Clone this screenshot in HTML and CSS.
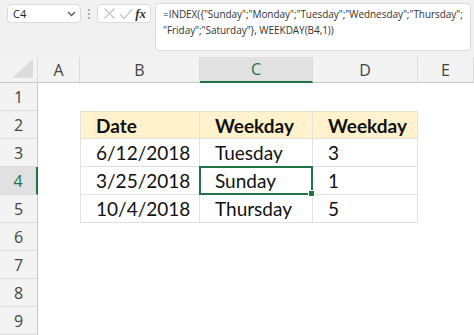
FILE: index.html
```html
<!DOCTYPE html>
<html>
<head>
<meta charset="utf-8">
<link rel="stylesheet" href="styles.css">
</head>
<body>
<div class="app">
  <div class="fbar">
    <div class="namebox">
      <span class="ref">C4</span>
      <svg class="chev" width="9" height="6" viewBox="0 0 9 6"><polyline points="1,1 4.5,4.5 8,1" fill="none" stroke="#555" stroke-width="1.3"/></svg>
    </div>
    <div class="dots"><i></i><i></i><i></i></div>
    <div class="fxbox">
      <svg width="13" height="13" viewBox="0 0 13 13"><path d="M1.5 1.5 L11.5 11.5 M11.5 1.5 L1.5 11.5" stroke="#c2c2c2" stroke-width="1.2" fill="none"/></svg>
      <svg width="14" height="12" viewBox="0 0 14 12"><path d="M1 6.5 L5 10.5 L13 1.5" stroke="#c2c2c2" stroke-width="1.2" fill="none"/></svg>
      <span class="fx">fx</span>
    </div>
    <div class="formula">=INDEX({"Sunday";"Monday";"Tuesday";"Wednesday";"Thursday";<br>"Friday";"Saturday"}, WEEKDAY(B4,1))</div>
  </div>
  <div class="sheet">
    <div class="ch corner"><svg width="22" height="20" viewBox="0 0 22 20"><polygon points="21,0 21,19 0,19" fill="#dcdcdc"/></svg></div>
    <div class="ch">A</div>
    <div class="ch">B</div>
    <div class="ch sel">C</div>
    <div class="ch">D</div>
    <div class="ch">E</div>

    <div class="rh">1</div><div class="c"></div><div class="c"></div><div class="c"></div><div class="c"></div><div class="c"></div>

    <div class="rh">2</div><div class="c"></div>
    <div class="c t th first">Date</div><div class="c t th">Weekday</div><div class="c t th">Weekday</div><div class="c"></div>

    <div class="rh">3</div><div class="c"></div>
    <div class="c t first">6/12/2018</div><div class="c t">Tuesday</div><div class="c t">3</div><div class="c"></div>

    <div class="rh sel">4</div><div class="c"></div>
    <div class="c t first">3/25/2018</div><div class="c t active">Sunday</div><div class="c t">1</div><div class="c"></div>

    <div class="rh">5</div><div class="c"></div>
    <div class="c t first">10/4/2018</div><div class="c t">Thursday</div><div class="c t">5</div><div class="c"></div>

    <div class="rh">6</div><div class="c"></div><div class="c"></div><div class="c"></div><div class="c"></div><div class="c"></div>
    <div class="rh">7</div><div class="c"></div><div class="c"></div><div class="c"></div><div class="c"></div><div class="c"></div>
    <div class="rh">8</div><div class="c"></div><div class="c"></div><div class="c"></div><div class="c"></div><div class="c"></div>
    <div class="rh">9</div><div class="c"></div><div class="c"></div><div class="c"></div><div class="c"></div><div class="c"></div>
  </div>
</div>
</body>
</html>
```

FILE: styles.css
```css
* { box-sizing: border-box; }
html, body { margin: 0; padding: 0; background: #fff; }
.app { width: 474px; height: 335px; overflow: hidden; }

.fbar {
  height: 57px;
  background: #f1f1f1;
  display: flex;
  align-items: flex-start;
  padding: 3px 0 0 7px;
  font-family: "Open Sans", "Noto Sans", sans-serif;
}
.namebox {
  margin-top: 1px;
  width: 74px;
  height: 19px;
  background: #fff;
  border: 1px solid #dadada;
  border-radius: 4px;
  display: flex;
  align-items: center;
  justify-content: space-between;
  padding: 0 4px 0 5px;
}
.ref { font-size: 11px; color: #222; }
.chev { display: block; }
.dots {
  width: 16px;
  height: 19px;
  margin-top: 1px;
  display: flex;
  flex-direction: column;
  align-items: center;
  justify-content: center;
  gap: 2px;
}
.dots i { display: block; width: 2px; height: 2px; background: #9a9a9a; border-radius: 1px; }
.fxbox {
  margin-top: 1px;
  width: 54px;
  height: 19px;
  background: #fff;
  border: 1px solid #dadada;
  border-radius: 4px;
  display: flex;
  align-items: center;
  justify-content: space-between;
  padding: 0 4px 0 5px;
}
.fxbox svg { display: block; }
.fx {
  font-family: "Liberation Serif", serif;
  font-style: italic;
  font-weight: bold;
  font-size: 13px;
  color: #333;
}
.formula {
  margin-left: 4px;
  width: 316px;
  height: 48px;
  background: #fff;
  border: 1px solid #dadada;
  border-radius: 4px;
  padding: 2px 0 0 7px;
  font-size: 10px;
  line-height: 16px;
  letter-spacing: -0.05px;
  color: #333;
  white-space: nowrap;
  overflow: hidden;
}

.sheet {
  display: grid;
  grid-template-columns: 38px 42px 120px 113px 105px 56px;
  grid-template-rows: 26px repeat(9, 28px);
}
.ch {
  background: #f3f3f3;
  border-right: 1px solid #dcdcdc;
  border-bottom: 1px solid #c8c8c8;
  display: flex;
  align-items: center;
  justify-content: center;
  font-family: "Open Sans", "Noto Sans", sans-serif;
  font-size: 16px;
  color: #444;
}
.ch.corner { justify-content: flex-end; align-items: flex-end; padding: 0 3px 3px 0; }
.ch.corner svg { display: block; }
.ch.sel { background: #e1e1e1; color: #217346; border-bottom: 2px solid #217346; }
.rh {
  background: #f3f3f3;
  border-right: 1px solid #c8c8c8;
  border-bottom: 1px solid #dcdcdc;
  display: flex;
  align-items: center;
  justify-content: center;
  font-family: "Open Sans", "Noto Sans", sans-serif;
  font-size: 16px;
  color: #444;
}
.rh.sel { background: #e1e1e1; color: #217346; border-right: 2px solid #217346; }
.c {
  background: #fff;
  font-family: "Lato", "Liberation Sans", sans-serif;
  font-size: 19px;
  color: #111;
  display: flex;
  align-items: center;
  padding-left: 15px;
  position: relative;
}
.t { border-right: 1px solid #e2e2e2; border-bottom: 1px solid #e2e2e2; }
.t.first { border-left: 1px solid #e2e2e2; }
.th { background: #fff2cc; font-weight: bold; border-top: 1px solid #e8e0c8; }
.active::after {
  content: "";
  position: absolute;
  left: -1px; top: -1px; right: -1px; bottom: -1px;
  border: 2px solid #217346;
}
.active::before {
  content: "";
  position: absolute;
  right: -3px; bottom: -3px;
  width: 5px; height: 5px;
  background: #217346;
  border: 1px solid #fff;
  z-index: 2;
}
```
